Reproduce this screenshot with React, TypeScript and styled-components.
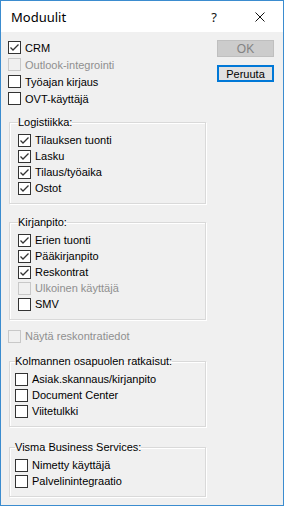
import styled, { createGlobalStyle } from 'styled-components';

const GlobalStyle = createGlobalStyle`
  html, body {
    margin: 0;
    padding: 0;
    background: #ffffff;
  }
  body {
    font-family: 'Liberation Sans', Arial, sans-serif;
    font-size: 11px;
  }
`;

type Item = { label: string; checked?: boolean; disabled?: boolean };

const topItems: Item[] = [
  { label: 'CRM', checked: true },
  { label: 'Outlook-integrointi', disabled: true },
  { label: 'Työajan kirjaus' },
  { label: 'OVT-käyttäjä' },
];

const groups: { title: string; inset: number; gap: number; items: Item[] }[] = [
  {
    title: 'Logistiikka:',
    inset: 8,
    gap: 9,
    items: [
      { label: 'Tilauksen tuonti', checked: true },
      { label: 'Lasku', checked: true },
      { label: 'Tilaus/työaika', checked: true },
      { label: 'Ostot', checked: true },
    ],
  },
  {
    title: 'Kirjanpito:',
    inset: 8,
    gap: 12,
    items: [
      { label: 'Erien tuonti', checked: true },
      { label: 'Pääkirjanpito', checked: true },
      { label: 'Reskontrat', checked: true },
      { label: 'Ulkoinen käyttäjä', disabled: true },
      { label: 'SMV' },
    ],
  },
];

const thirdParty: { title: string; inset: number; gap: number; items: Item[] }[] = [
  {
    title: 'Kolmannen osapuolen ratkaisut:',
    inset: 5,
    gap: 11,
    items: [
      { label: 'Asiak.skannaus/kirjanpito' },
      { label: 'Document Center' },
      { label: 'Viitetulkki' },
    ],
  },
  {
    title: 'Visma Business Services:',
    inset: 5,
    gap: 14,
    items: [{ label: 'Nimetty käyttäjä' }, { label: 'Palvelinintegraatio' }],
  },
];

const CheckRow = ({ label, checked, disabled, height = 16 }: Item & { height?: number }) => (
  <Row $height={height} $disabled={disabled}>
    <Box $disabled={disabled}>
      {checked && (
        <svg width="11" height="11" viewBox="0 0 11 11">
          <polyline points="1.5,5.5 4,8 9.5,2.5" fill="none" stroke="#333" strokeWidth="1.3" />
        </svg>
      )}
    </Box>
    <span>{label}</span>
  </Row>
);

const Group = ({ title, inset, gap, items }: { title: string; inset: number; gap: number; items: Item[] }) => (
  <Fieldset $inset={inset} $gap={gap}>
    <Legend>{title}</Legend>
    {items.map((it) => (
      <CheckRow key={it.label} {...it} />
    ))}
  </Fieldset>
);

const App = () => {
  return (
    <>
      <GlobalStyle />
      <Window>
        <TitleBar>
          <Title>Moduulit</Title>
          <CaptionButton>?</CaptionButton>
          <CaptionButton>
            <svg width="10" height="10" viewBox="0 0 10 10">
              <path d="M0.5 0.5 L9.5 9.5 M9.5 0.5 L0.5 9.5" stroke="#111" strokeWidth="1" />
            </svg>
          </CaptionButton>
        </TitleBar>
        <Body>
          <Column>
            {topItems.map((it) => (
              <CheckRow key={it.label} {...it} height={17} />
            ))}
            {groups.map((g) => (
              <Group key={g.title} {...g} />
            ))}
            <Spacer $h={8} />
            <CheckRow label="Näytä reskontratiedot" disabled />
            {thirdParty.map((g) => (
              <Group key={g.title} {...g} />
            ))}
          </Column>
          <Buttons>
            <Button disabled>OK</Button>
            <Button $focused>Peruuta</Button>
          </Buttons>
        </Body>
      </Window>
    </>
  );
};

export default App;

const Window = styled.div`
  box-sizing: border-box;
  width: 284px;
  height: 506px;
  border: 1px solid #3b8ccf;
  display: flex;
  flex-direction: column;
  background: #f0f0f0;
`;

const TitleBar = styled.div`
  height: 31px;
  background: #ffffff;
  display: flex;
  align-items: center;
  padding-left: 10px;
`;

const Title = styled.div`
  flex: 1;
  font-family: 'Noto Sans', 'Open Sans', sans-serif;
  font-size: 13px;
  color: #000;
`;

const CaptionButton = styled.div`
  width: 46px;
  height: 31px;
  display: flex;
  align-items: center;
  justify-content: center;
  font-family: 'Noto Sans', sans-serif;
  font-size: 13px;
  color: #111;
`;

const Body = styled.div`
  flex: 1;
  display: flex;
  padding: 7px 0 0 7px;
`;

const Column = styled.div`
  width: 198px;
  display: flex;
  flex-direction: column;
`;

const Spacer = styled.div<{ $h: number }>`
  height: ${(p) => p.$h}px;
`;

const Row = styled.div<{ $height: number; $disabled?: boolean }>`
  height: ${(p) => p.$height}px;
  display: flex;
  align-items: center;
  gap: 4px;
  color: ${(p) => (p.$disabled ? '#8f8f8f' : '#000')};
  white-space: nowrap;
`;

const Box = styled.div<{ $disabled?: boolean }>`
  box-sizing: border-box;
  width: 13px;
  height: 13px;
  border: 1px solid ${(p) => (p.$disabled ? '#c8c8c8' : '#333')};
  background: ${(p) => (p.$disabled ? '#f0f0f0' : '#fff')};
  display: flex;
  align-items: center;
  justify-content: center;
`;

const Fieldset = styled.fieldset<{ $inset: number; $gap: number }>`
  margin: ${(p) => p.$gap}px 0 0 1px;
  width: 197px;
  box-sizing: border-box;
  padding: 3px 0 7px ${(p) => p.$inset}px;
  border: 1px solid #d9d9d9;
  box-shadow: inset 1px 1px 0 #fff, 1px 1px 0 #fff;
  min-width: 0;
`;

const Legend = styled.legend`
  padding: 0;
  line-height: 13px;
  color: #000;
`;

const Buttons = styled.div`
  margin-left: 11px;
  padding-top: 1px;
  display: flex;
  flex-direction: column;
  gap: 8px;
`;

const Button = styled.button<{ $focused?: boolean }>`
  box-sizing: border-box;
  width: 57px;
  height: 17px;
  padding: 0;
  font-family: 'Liberation Sans', Arial, sans-serif;
  font-size: ${(p) => (p.disabled ? '12px' : '11px')};
  background: ${(p) => (p.disabled ? '#cccccc' : '#e1e1e1')};
  color: ${(p) => (p.disabled ? '#838383' : '#000')};
  border: 1px solid ${(p) => (p.$focused ? '#0078d7' : '#bfbfbf')};
  box-shadow: ${(p) => (p.$focused ? 'inset 0 0 0 1px #0078d7' : 'none')};
`;
